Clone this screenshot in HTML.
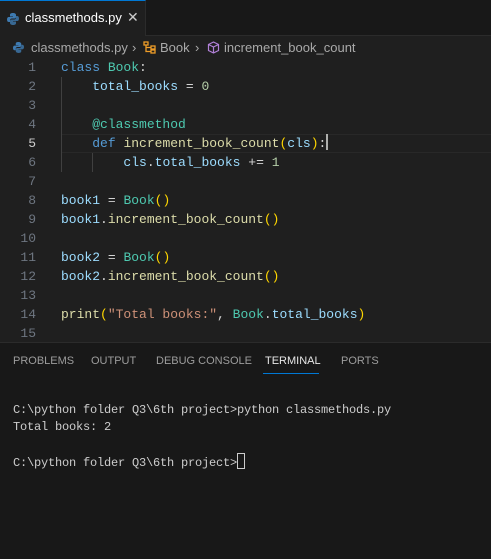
<!DOCTYPE html>
<html><head><style>
body{margin:0;width:491px;height:558px;background:#1f1f1f;overflow:hidden;position:relative;font-family:"Liberation Sans",sans-serif}
.tabbar{position:absolute;left:0;top:0;width:491px;height:35px;background:#181818;border-bottom:1px solid #2b2b2b}
.tab{position:absolute;left:0;top:0;width:146px;height:36px;background:#1f1f1f;border-top:1px solid #0078d4;border-right:1px solid #2b2b2b;box-sizing:border-box}
.tab span{position:absolute;left:25px;top:9px;color:#fff;font-size:13px}
.tab .x{left:127px;top:8px;color:#ccc;font-size:14px}
.bc{position:absolute;left:13px;top:40px;color:#a9a9a9;font-size:13px;white-space:nowrap}
.code{position:absolute;left:0;top:58px;font-family:"Liberation Mono",monospace;font-size:13px;line-height:19px;white-space:pre}
.ln{position:absolute;left:0;width:36px;text-align:right;color:#6e7681}
.tx{position:absolute;left:61px;color:#9cdcfe}
.k{color:#569cd6}.c{color:#4ec9b0}.f{color:#dcdcaa}.y{color:#ffd700}.s{color:#ce9178}.n{color:#b5cea8}.w{color:#d4d4d4}
.panel{position:absolute;left:0;top:342px;width:491px;height:216px;background:#181818;border-top:1px solid #2b2b2b}
.ptabs{position:absolute;top:12px;left:13px;font-size:11px;color:#9d9d9d;white-space:nowrap}
.ptabs span{position:absolute}
.term{position:absolute;left:13px;top:59px;font-family:"Liberation Mono",monospace;font-size:12px;line-height:17px;color:#ccc;white-space:pre;letter-spacing:-0.2px}
</style></head><body>
<div class="tabbar"><div class="tab">
<svg style="position:absolute;left:7px;top:12px" width="12" height="12" viewBox="0 0 12 12"><path d="M6 0C3 0 3 1.3 3 2v1.5h3v.5H1.8C.6 4 0 5 0 6.5S.6 9 1.8 9H3V7.3C3 6.3 3.8 5.5 4.8 5.5h2.7C8.3 5.5 9 4.8 9 4V2C9 1 8 0 6 0z" fill="#3e7ab0"/><path d="M6 12c3 0 3-1.3 3-2V8.5H6V8h4.2c1.2 0 1.8-1 1.8-2.5S11.4 3 10.2 3H9v1.7c0 1-.8 1.8-1.8 1.8H4.5C3.7 6.5 3 7.2 3 8v2c0 1 1 2 3 2z" fill="#3e7ab0" opacity=".8"/></svg>
<span>classmethods.py</span><span class="x">✕</span></div></div>
<div class="bc">
<svg style="position:absolute;left:0;top:2px" width="11" height="11" viewBox="0 0 12 12"><path d="M6 0C3 0 3 1.3 3 2v1.5h3v.5H1.8C.6 4 0 5 0 6.5S.6 9 1.8 9H3V7.3C3 6.3 3.8 5.5 4.8 5.5h2.7C8.3 5.5 9 4.8 9 4V2C9 1 8 0 6 0z" fill="#3e7ab0"/><path d="M6 12c3 0 3-1.3 3-2V8.5H6V8h4.2c1.2 0 1.8-1 1.8-2.5S11.4 3 10.2 3H9v1.7c0 1-.8 1.8-1.8 1.8H4.5C3.7 6.5 3 7.2 3 8v2c0 1 1 2 3 2z" fill="#3e7ab0" opacity=".8"/></svg>
<span style="position:absolute;left:18px">classmethods.py</span>
<span style="position:absolute;left:119px;color:#aaa">›</span>
<svg style="position:absolute;left:130px;top:1px" width="13" height="13" viewBox="0 0 13 13" fill="none" stroke="#ee9d28" stroke-width="1.3"><rect x="1" y="1" width="4" height="3"/><rect x="8" y="5" width="4" height="3"/><rect x="8" y="9" width="4" height="3"/><path d="M3 4v6.5h5M3 6.5h5"/></svg>
<span style="position:absolute;left:147px">Book</span>
<span style="position:absolute;left:182px;color:#aaa">›</span>
<svg style="position:absolute;left:194px;top:1px" width="13" height="13" viewBox="0 0 13 13" fill="none" stroke="#b180d7" stroke-width="1.2"><path d="M6.5 1l5 2.5v6L6.5 12l-5-2.5v-6zM1.5 3.5l5 2.5 5-2.5M6.5 6v6"/></svg>
<span style="position:absolute;left:211px">increment_book_count</span>
</div>
<div class="code">
<div style="position:absolute;left:61px;top:76px;width:430px;height:19px;border-top:1px solid #282828;border-bottom:1px solid #282828;box-sizing:border-box"></div>
<div style="position:absolute;left:61px;top:19px;width:1px;height:95px;background:#404040"></div>
<div style="position:absolute;left:92px;top:95px;width:1px;height:19px;background:#404040"></div>
<div class="ln" style="top:0">1</div><div class="tx" style="top:0"><span class="k">class</span> <span class="c">Book</span><span class="w">:</span></div>
<div class="ln" style="top:19px">2</div><div class="tx" style="top:19px">    total_books <span class="w">=</span> <span class="n">0</span></div>
<div class="ln" style="top:38px">3</div>
<div class="ln" style="top:57px">4</div><div class="tx" style="top:57px">    <span class="c">@classmethod</span></div>
<div class="ln" style="top:76px;color:#ccc">5</div><div class="tx" style="top:76px">    <span class="k">def</span> <span class="f">increment_book_count</span><span class="y">(</span>cls<span class="y">)</span><span class="w">:</span><span style="display:inline-block;width:2px;height:16px;background:#aeafad;vertical-align:-3px"></span></div>
<div class="ln" style="top:95px">6</div><div class="tx" style="top:95px">        cls<span class="w">.</span>total_books <span class="w">+=</span> <span class="n">1</span></div>
<div class="ln" style="top:114px">7</div>
<div class="ln" style="top:133px">8</div><div class="tx" style="top:133px">book1 <span class="w">=</span> <span class="c">Book</span><span class="y">()</span></div>
<div class="ln" style="top:152px">9</div><div class="tx" style="top:152px">book1<span class="w">.</span><span class="f">increment_book_count</span><span class="y">()</span></div>
<div class="ln" style="top:171px">10</div>
<div class="ln" style="top:190px">11</div><div class="tx" style="top:190px">book2 <span class="w">=</span> <span class="c">Book</span><span class="y">()</span></div>
<div class="ln" style="top:209px">12</div><div class="tx" style="top:209px">book2<span class="w">.</span><span class="f">increment_book_count</span><span class="y">()</span></div>
<div class="ln" style="top:228px">13</div>
<div class="ln" style="top:247px">14</div><div class="tx" style="top:247px"><span class="f">print</span><span class="y">(</span><span class="s">"Total books:"</span><span class="w">,</span> <span class="c">Book</span><span class="w">.</span>total_books<span class="y">)</span></div>
<div class="ln" style="top:266px">15</div>
</div>
<div class="panel">
<div class="ptabs"><span style="left:0">PROBLEMS</span><span style="left:78px">OUTPUT</span><span style="left:143px">DEBUG CONSOLE</span><span style="left:252px;color:#e7e7e7">TERMINAL</span><span style="left:328px">PORTS</span></div>
<div style="position:absolute;left:263px;top:30px;width:56px;height:1px;background:#0078d4"></div>
<div class="term">C:\python folder Q3\6th project>python classmethods.py
Total books: 2

C:\python folder Q3\6th project><span style="display:inline-block;width:6px;height:14px;border:1px solid #ccc;vertical-align:-3px"></span></div>
</div>
</body></html>
